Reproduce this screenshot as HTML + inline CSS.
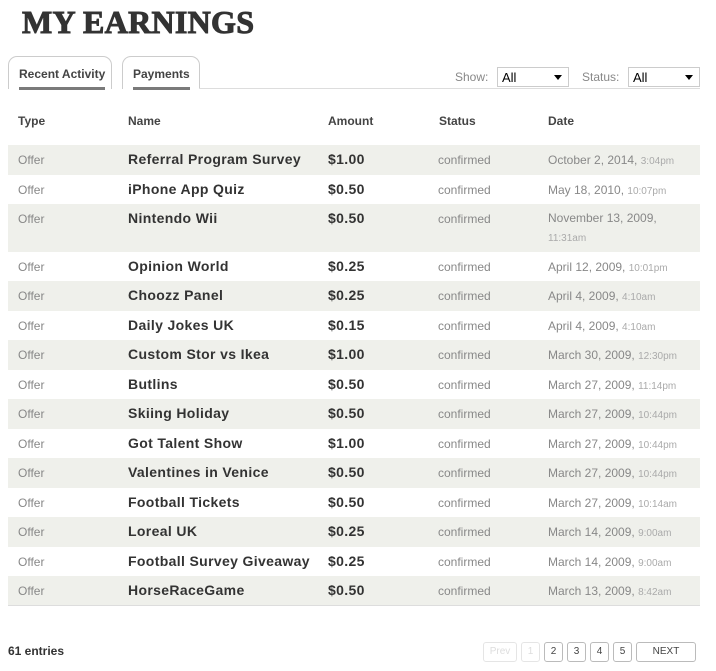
<!DOCTYPE html>
<html><head><meta charset="utf-8"><style>
*{margin:0;padding:0;box-sizing:border-box}
body{width:716px;height:671px;background:#fff;font-family:"Liberation Sans",Arial,sans-serif;position:relative;overflow:hidden;color:#333}
.title{position:absolute;left:22px;top:4px;font-family:"Liberation Serif",serif;font-weight:bold;font-size:32px;color:#333;letter-spacing:0.3px;-webkit-text-stroke:1px #333}
.tab{position:absolute;top:56px;height:33px;border:1px solid #ccc;border-bottom:none;border-radius:9px 9px 0 0;background:#fff;font-size:12px;font-weight:bold;color:#444;padding:10px 0 0 10px}
.tab span{display:inline-block;border-bottom:3px solid #7a7a7a;padding-bottom:6px}
.line{position:absolute;left:199px;top:88px;width:501px;height:1px;background:#ddd}
.lbl{position:absolute;top:70px;font-size:12px;color:#888}
.sel{position:absolute;top:67px;height:20px;border:1px solid #ccc;font-size:13px;color:#000;padding:2px 0 0 4px}
.sel:after{content:"";position:absolute;right:6px;top:7px;border-left:4px solid transparent;border-right:4px solid transparent;border-top:5px solid #000}
.hd{position:absolute;top:114px;font-size:12px;font-weight:bold;color:#444}
.row{position:absolute;left:8px;width:692px}
.row.s{background:#eff0eb}
.c{position:absolute;top:8px;font-size:12px;color:#888}
.n{position:absolute;top:6px;font-size:14px;font-weight:bold;color:#333;letter-spacing:0.35px}
.t{font-size:10px;color:#aaa}
.foot{position:absolute;left:8px;top:644px;font-size:12px;font-weight:bold;color:#333}
.pg{position:absolute;top:642px;height:20px;border:1px solid #bbb;border-radius:3px;font-size:10px;color:#444;text-align:center;line-height:18px}
.pg.d{border-color:#e5e5e5;color:#ddd}
</style></head><body>
<div class="title">MY EARNINGS</div>
<div class="tab" style="left:8px;width:104px"><span>Recent Activity</span></div>
<div class="tab" style="left:122px;width:78px"><span>Payments</span></div>
<div class="line"></div>
<div class="lbl" style="left:455px">Show:</div>
<div class="sel" style="left:497px;width:72px">All</div>
<div class="lbl" style="left:582px">Status:</div>
<div class="sel" style="left:628px;width:72px">All</div>
<div class="hd" style="left:18px">Type</div>
<div class="hd" style="left:128px">Name</div>
<div class="hd" style="left:328px">Amount</div>
<div class="hd" style="left:439px">Status</div>
<div class="hd" style="left:548px">Date</div>

<div class="row s" style="top:145px;height:30px"><div class="c" style="left:10px">Offer</div><div class="n" style="left:120px">Referral Program Survey</div><div class="n" style="left:320px">$1.00</div><div class="c" style="left:430px">confirmed</div><div class="c" style="left:540px">October 2, 2014, <span class="t">3:04pm</span></div></div>
<div class="row" style="top:175px;height:29px"><div class="c" style="left:10px">Offer</div><div class="n" style="left:120px">iPhone App Quiz</div><div class="n" style="left:320px">$0.50</div><div class="c" style="left:430px">confirmed</div><div class="c" style="left:540px">May 18, 2010, <span class="t">10:07pm</span></div></div>
<div class="row s" style="top:204px;height:48px"><div class="c" style="left:10px">Offer</div><div class="n" style="left:120px">Nintendo Wii</div><div class="n" style="left:320px">$0.50</div><div class="c" style="left:430px">confirmed</div><div class="c" style="left:540px;line-height:19px;top:5px">November 13, 2009,<br><span class="t">11:31am</span></div></div>
<div class="row" style="top:252px;height:29px"><div class="c" style="left:10px">Offer</div><div class="n" style="left:120px">Opinion World</div><div class="n" style="left:320px">$0.25</div><div class="c" style="left:430px">confirmed</div><div class="c" style="left:540px">April 12, 2009, <span class="t">10:01pm</span></div></div>
<div class="row s" style="top:281px;height:30px"><div class="c" style="left:10px">Offer</div><div class="n" style="left:120px">Choozz Panel</div><div class="n" style="left:320px">$0.25</div><div class="c" style="left:430px">confirmed</div><div class="c" style="left:540px">April 4, 2009, <span class="t">4:10am</span></div></div>
<div class="row" style="top:311px;height:29px"><div class="c" style="left:10px">Offer</div><div class="n" style="left:120px">Daily Jokes UK</div><div class="n" style="left:320px">$0.15</div><div class="c" style="left:430px">confirmed</div><div class="c" style="left:540px">April 4, 2009, <span class="t">4:10am</span></div></div>
<div class="row s" style="top:340px;height:30px"><div class="c" style="left:10px">Offer</div><div class="n" style="left:120px">Custom Stor vs Ikea</div><div class="n" style="left:320px">$1.00</div><div class="c" style="left:430px">confirmed</div><div class="c" style="left:540px">March 30, 2009, <span class="t">12:30pm</span></div></div>
<div class="row" style="top:370px;height:29px"><div class="c" style="left:10px">Offer</div><div class="n" style="left:120px">Butlins</div><div class="n" style="left:320px">$0.50</div><div class="c" style="left:430px">confirmed</div><div class="c" style="left:540px">March 27, 2009, <span class="t">11:14pm</span></div></div>
<div class="row s" style="top:399px;height:30px"><div class="c" style="left:10px">Offer</div><div class="n" style="left:120px">Skiing Holiday</div><div class="n" style="left:320px">$0.50</div><div class="c" style="left:430px">confirmed</div><div class="c" style="left:540px">March 27, 2009, <span class="t">10:44pm</span></div></div>
<div class="row" style="top:429px;height:29px"><div class="c" style="left:10px">Offer</div><div class="n" style="left:120px">Got Talent Show</div><div class="n" style="left:320px">$1.00</div><div class="c" style="left:430px">confirmed</div><div class="c" style="left:540px">March 27, 2009, <span class="t">10:44pm</span></div></div>
<div class="row s" style="top:458px;height:30px"><div class="c" style="left:10px">Offer</div><div class="n" style="left:120px">Valentines in Venice</div><div class="n" style="left:320px">$0.50</div><div class="c" style="left:430px">confirmed</div><div class="c" style="left:540px">March 27, 2009, <span class="t">10:44pm</span></div></div>
<div class="row" style="top:488px;height:29px"><div class="c" style="left:10px">Offer</div><div class="n" style="left:120px">Football Tickets</div><div class="n" style="left:320px">$0.50</div><div class="c" style="left:430px">confirmed</div><div class="c" style="left:540px">March 27, 2009, <span class="t">10:14am</span></div></div>
<div class="row s" style="top:517px;height:30px"><div class="c" style="left:10px">Offer</div><div class="n" style="left:120px">Loreal UK</div><div class="n" style="left:320px">$0.25</div><div class="c" style="left:430px">confirmed</div><div class="c" style="left:540px">March 14, 2009, <span class="t">9:00am</span></div></div>
<div class="row" style="top:547px;height:29px"><div class="c" style="left:10px">Offer</div><div class="n" style="left:120px">Football Survey Giveaway</div><div class="n" style="left:320px">$0.25</div><div class="c" style="left:430px">confirmed</div><div class="c" style="left:540px">March 14, 2009, <span class="t">9:00am</span></div></div>
<div class="row s" style="top:576px;height:30px;border-bottom:1px solid #ddd"><div class="c" style="left:10px">Offer</div><div class="n" style="left:120px">HorseRaceGame</div><div class="n" style="left:320px">$0.50</div><div class="c" style="left:430px">confirmed</div><div class="c" style="left:540px">March 13, 2009, <span class="t">8:42am</span></div></div>

<div class="foot">61 entries</div>
<div class="pg d" style="left:483px;width:34px">Prev</div>
<div class="pg d" style="left:521px;width:19px">1</div>
<div class="pg" style="left:544px;width:19px">2</div>
<div class="pg" style="left:567px;width:19px">3</div>
<div class="pg" style="left:590px;width:19px">4</div>
<div class="pg" style="left:613px;width:19px">5</div>
<div class="pg" style="left:636px;width:60px">NEXT</div>
</body></html>
